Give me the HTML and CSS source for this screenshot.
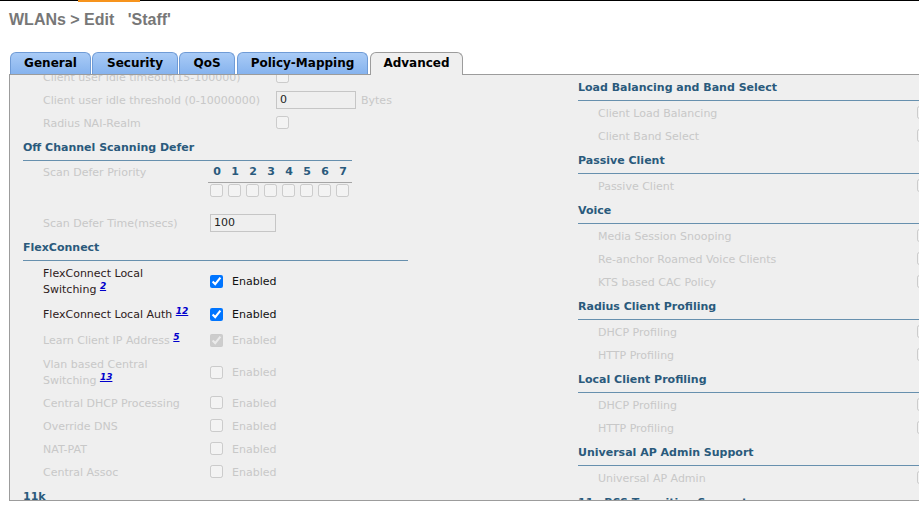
FILE: index.html
```html
<!DOCTYPE html>
<html>
<head>
<meta charset="utf-8">
<title>WLANs &gt; Edit 'Staff'</title>
<link rel="stylesheet" href="styles.css">
</head>
<body>
<div class="topbar"><div class="topbar-accent"></div></div>
<h1 class="title">WLANs &gt; Edit&nbsp;&nbsp; 'Staff'</h1>
<div class="tabs">
  <div class="tab tab-general">General</div>
  <div class="tab tab-security">Security</div>
  <div class="tab tab-qos">QoS</div>
  <div class="tab tab-policy">Policy-Mapping</div>
  <div class="tab tab-active">Advanced</div>
</div>
<div class="panel">
  <div class="cols">
    <div class="col col-left">
      <div class="row"><div class="lbl lbl-wide dis">Client user idle timeout(15-100000)</div><input type="checkbox" class="cb" disabled></div>
      <div class="row"><div class="lbl lbl-wide dis">Client user idle threshold (0-10000000)</div><input class="txt txt-80" value="0" readonly><span class="unit dis">Bytes</span></div>
      <div class="row"><div class="lbl lbl-wide dis">Radius NAI-Realm</div><input type="checkbox" class="cb" disabled></div>

      <div class="head head-short">Off Channel Scanning Defer</div>
      <div class="row row-prio">
        <div class="lbl lbl-prio dis">Scan Defer Priority</div>
        <div class="prio">
          <div class="prio-digits"><span>0</span><span>1</span><span>2</span><span>3</span><span>4</span><span>5</span><span>6</span><span>7</span></div>
          <div class="prio-boxes">
            <span class="prio-cell"><input type="checkbox" class="cb" disabled></span>
            <span class="prio-cell"><input type="checkbox" class="cb" disabled></span>
            <span class="prio-cell"><input type="checkbox" class="cb" disabled></span>
            <span class="prio-cell"><input type="checkbox" class="cb" disabled></span>
            <span class="prio-cell"><input type="checkbox" class="cb" disabled></span>
            <span class="prio-cell"><input type="checkbox" class="cb" disabled></span>
            <span class="prio-cell"><input type="checkbox" class="cb" disabled></span>
            <span class="prio-cell"><input type="checkbox" class="cb" disabled></span>
          </div>
        </div>
      </div>
      <div class="row"><div class="lbl lbl-fc dis">Scan Defer Time(msecs)</div><input class="txt txt-66" value="100" readonly></div>

      <div class="head head-mid">FlexConnect</div>
      <div class="row row-40"><div class="lbl lbl-fc on">FlexConnect Local Switching <sup><a href="#">2</a></sup></div><div class="opt"><input type="checkbox" class="cb" checked><span class="opt-txt opt-on">Enabled</span></div></div>
      <div class="row row-26"><div class="lbl lbl-fc on">FlexConnect Local Auth <sup><a href="#">12</a></sup></div><div class="opt"><input type="checkbox" class="cb" checked><span class="opt-txt opt-on">Enabled</span></div></div>
      <div class="row row-26"><div class="lbl lbl-fc dis">Learn Client IP Address <sup><a href="#">5</a></sup></div><div class="opt"><input type="checkbox" class="cb" checked disabled><span class="opt-txt dis">Enabled</span></div></div>
      <div class="row row-38"><div class="lbl lbl-fc dis">Vlan based Central Switching <sup><a href="#">13</a></sup></div><div class="opt"><input type="checkbox" class="cb" disabled><span class="opt-txt dis">Enabled</span></div></div>
      <div class="row"><div class="lbl lbl-fc dis">Central DHCP Processing</div><div class="opt"><input type="checkbox" class="cb" disabled><span class="opt-txt dis">Enabled</span></div></div>
      <div class="row"><div class="lbl lbl-fc dis">Override DNS</div><div class="opt"><input type="checkbox" class="cb" disabled><span class="opt-txt dis">Enabled</span></div></div>
      <div class="row"><div class="lbl lbl-fc dis">NAT-PAT</div><div class="opt"><input type="checkbox" class="cb" disabled><span class="opt-txt dis">Enabled</span></div></div>
      <div class="row"><div class="lbl lbl-fc dis">Central Assoc</div><div class="opt"><input type="checkbox" class="cb" disabled><span class="opt-txt dis">Enabled</span></div></div>

      <div class="head head-mid">11k</div>
    </div>

    <div class="col col-right">
      <div class="head">Load Balancing and Band Select</div>
      <div class="row"><div class="lbl lbl-r dis">Client Load Balancing</div><input type="checkbox" class="cb" disabled></div>
      <div class="row"><div class="lbl lbl-r dis">Client Band Select</div><input type="checkbox" class="cb" disabled></div>
      <div class="head">Passive Client</div>
      <div class="row"><div class="lbl lbl-r dis">Passive Client</div><input type="checkbox" class="cb" disabled></div>
      <div class="head">Voice</div>
      <div class="row"><div class="lbl lbl-r dis">Media Session Snooping</div><input type="checkbox" class="cb" disabled></div>
      <div class="row"><div class="lbl lbl-r dis">Re-anchor Roamed Voice Clients</div><input type="checkbox" class="cb" disabled></div>
      <div class="row"><div class="lbl lbl-r dis">KTS based CAC Policy</div><input type="checkbox" class="cb" disabled></div>
      <div class="head">Radius Client Profiling</div>
      <div class="row"><div class="lbl lbl-r dis">DHCP Profiling</div><input type="checkbox" class="cb" disabled></div>
      <div class="row"><div class="lbl lbl-r dis">HTTP Profiling</div><input type="checkbox" class="cb" disabled></div>
      <div class="head">Local Client Profiling</div>
      <div class="row"><div class="lbl lbl-r dis">DHCP Profiling</div><input type="checkbox" class="cb" disabled></div>
      <div class="row"><div class="lbl lbl-r dis">HTTP Profiling</div><input type="checkbox" class="cb" disabled></div>
      <div class="head">Universal AP Admin Support</div>
      <div class="row"><div class="lbl lbl-r dis">Universal AP Admin</div><input type="checkbox" class="cb" disabled></div>
      <div class="head">11v BSS Transition Support</div>
    </div>
  </div>
</div>
</body>
</html>
```
FILE: styles.css
```css
* { box-sizing: border-box; }

html, body {
  margin: 0;
  padding: 0;
  overflow: hidden;
  background: #ffffff;
}

body {
  font-family: "DejaVu Sans", Verdana, sans-serif;
  font-size: 11px;
  color: #222222;
}

.topbar {
  height: 1px;
  background: #000000;
}

.topbar-accent {
  margin-left: 78px;
  width: 62px;
  height: 2px;
  background: #f7941d;
}

.title {
  margin: 10px 0 0 9px;
  font-family: "Liberation Sans", Arial, sans-serif;
  font-size: 16px;
  line-height: 18px;
  font-weight: bold;
  color: #777777;
}

.tabs {
  display: flex;
  align-items: flex-start;
  margin: 23px 0 0 10px;
  height: 22px;
}

.tab {
  height: 22px;
  padding: 0;
  border: 1px solid #6f9bd6;
  border-bottom: none;
  border-radius: 6px 6px 0 0;
  background: linear-gradient(#a9cbf6, #86b3ee);
  font-size: 12px;
  font-weight: bold;
  line-height: 20px;
  text-align: center;
  color: #000000;
}

.tab-general { width: 81px; }
.tab-security { width: 86px; margin-left: 1px; }
.tab-qos { width: 56px; margin-left: 1px; }
.tab-policy { width: 131px; margin-left: 2px; }

.tab-active {
  position: relative;
  z-index: 1;
  width: 93px;
  height: 23px;
  margin-left: 2px;
  border-color: #9c9c9c;
  background: #efefef;
}

.panel {
  margin-left: 9px;
  width: 1100px;
  height: 427px;
  border-top: 1px solid #9c9c9c;
  border-left: 1px solid #9c9c9c;
  border-bottom: 1px solid #9c9c9c;
  background: #efefef;
  overflow: hidden;
  padding-left: 13px;
}

.cols {
  display: flex;
  align-items: flex-start;
}

.col-left {
  width: 555px;
  margin-top: -10px;
}

.col-right {
  width: 500px;
  margin-top: -1px;
}

.head {
  padding: 7px 0 5px;
  line-height: 14px;
  font-weight: bold;
  color: #2a5a7c;
  border-bottom: 1px solid #6790ae;
}

.head-short { width: 329px; }
.head-mid { width: 385px; }

.row {
  display: flex;
  align-items: center;
  height: 23px;
  line-height: 23px;
}

.row-26 { height: 26px; }
.row-38 { height: 38px; }
.row-40 { height: 40px; }

.lbl {
  padding-left: 20px;
  padding-top: 2px;
  line-height: 21px;
  flex: none;
}

.lbl-wide { width: 253px; }
.lbl-fc { width: 187px; padding-right: 19px; line-height: 16px; }
.lbl-prio { width: 185px; padding-top: 1px; line-height: 22px; }
.lbl-r { width: 339px; }

.dis { color: #c8c8c8; }
.on { color: #2e2020; }

sup {
  font-size: 9px;
  line-height: 0;
  vertical-align: 4px;
}

sup a {
  color: #0000cc;
  font-weight: bold;
  font-style: italic;
  text-decoration: underline;
}

.cb {
  margin: 0;
  width: 13px;
  height: 13px;
  flex: none;
}

.opt {
  display: flex;
  align-items: center;
  gap: 9px;
  line-height: 16px;
}

.opt-txt { padding-top: 2px; }
.opt-on { color: #111111; }

.txt {
  height: 18px;
  margin: 0;
  padding: 0 3px;
  border: 1px solid #c6c6c6;
  background: #efefef;
  font-family: "DejaVu Sans", Verdana, sans-serif;
  font-size: 11px;
  color: #222222;
  outline: none;
}

.txt-80 { width: 80px; }
.txt-66 { width: 66px; }

.unit {
  margin-left: 5px;
  padding-top: 2px;
}

.row-prio {
  height: 50px;
  align-items: flex-start;
}

.prio { width: 144px; }

.prio-digits {
  display: flex;
  height: 22px;
  padding-top: 1px;
  border-bottom: 1px solid #a5a5a5;
  line-height: 20px;
  font-weight: bold;
  color: #2a5a7c;
}

.prio-digits span {
  width: 18px;
  text-align: center;
}

.prio-boxes {
  display: flex;
  height: 28px;
  padding-top: 1px;
  line-height: 13px;
}

.prio-cell {
  width: 18px;
  padding-left: 2px;
  display: flex;
}
```
